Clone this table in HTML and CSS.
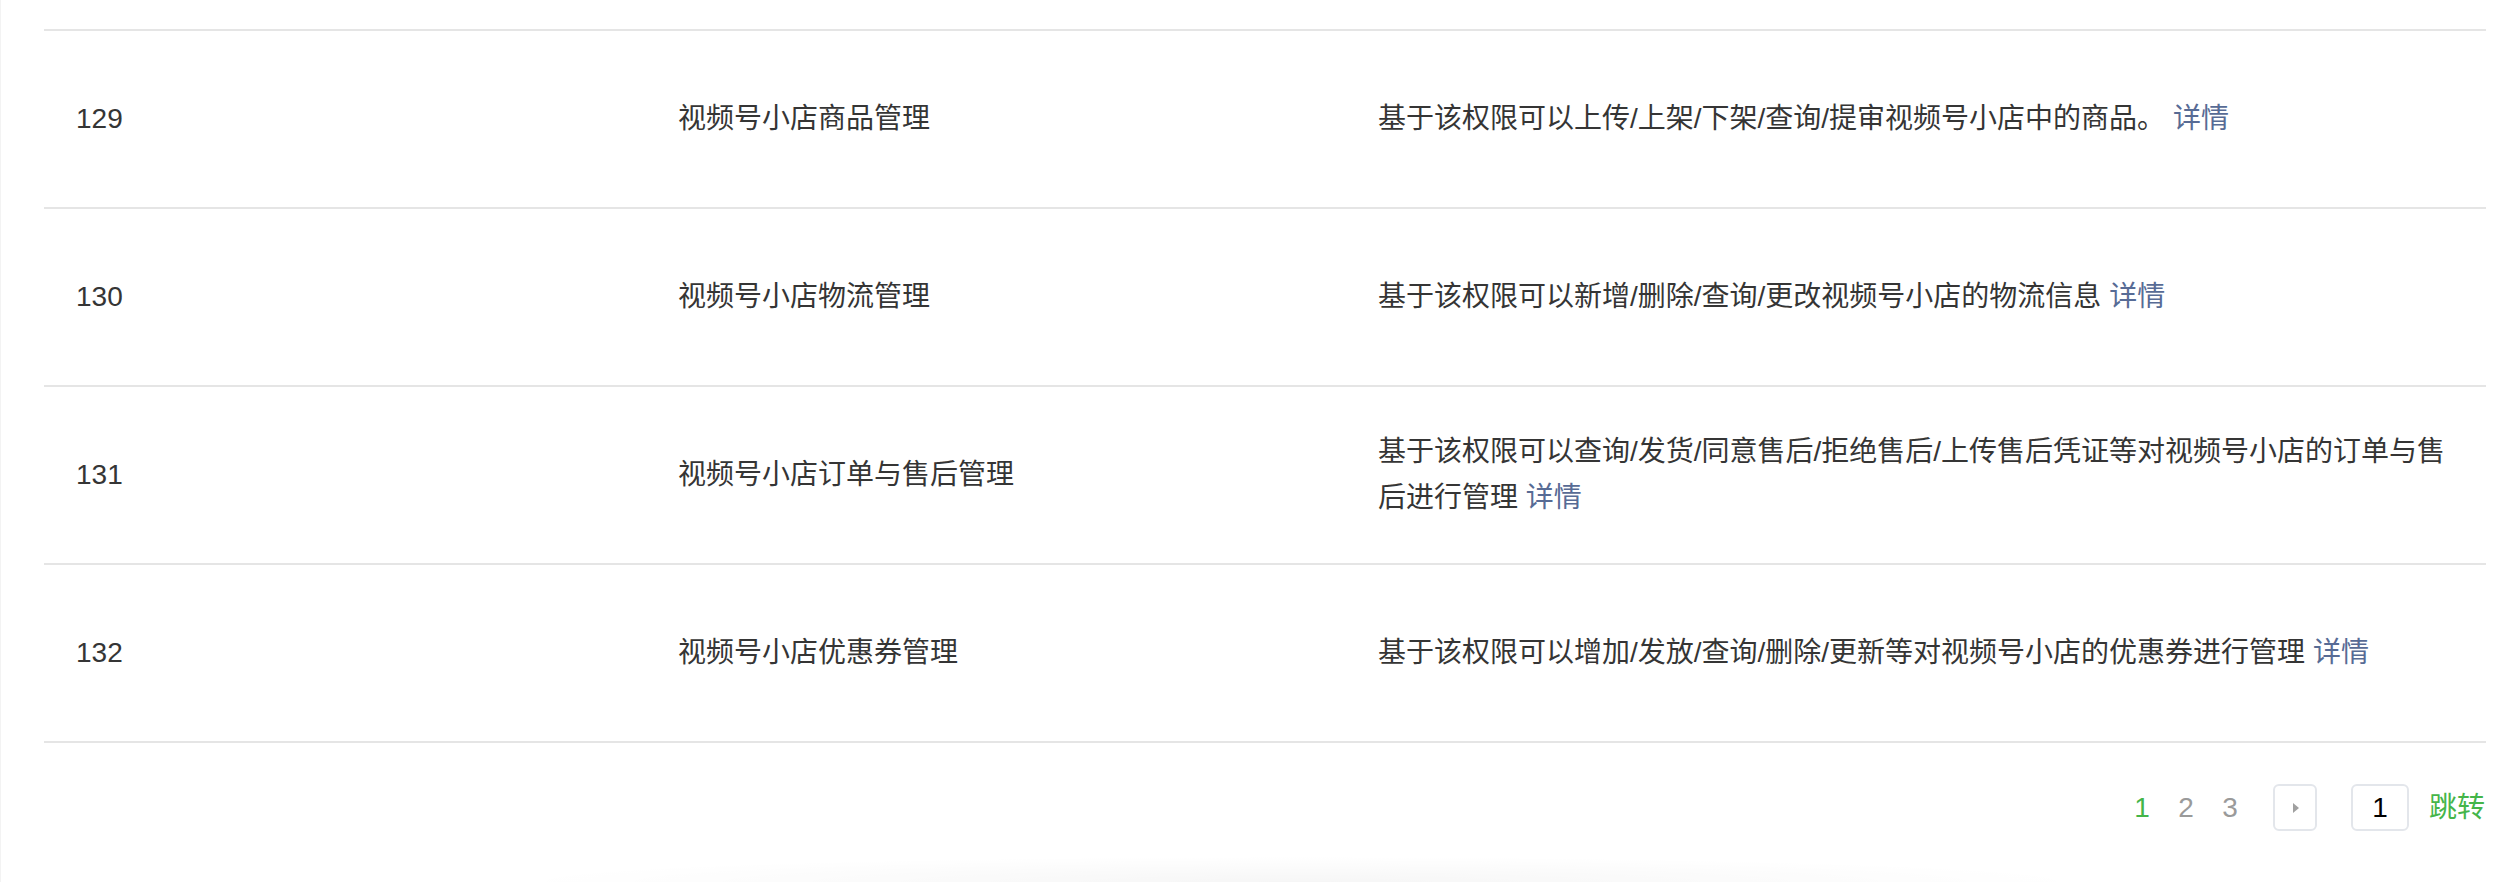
FILE: index.html
```html
<!DOCTYPE html>
<html lang="zh-CN">
<head>
<meta charset="utf-8">
<title>权限列表</title>
<link rel="stylesheet" href="styles.css">
</head>
<body>
<div class="page">
  <div class="table">
    <div class="row">
      <div class="cell c-id">129</div>
      <div class="cell c-name">视频号小店商品管理</div>
      <div class="cell c-desc">基于该权限可以上传/上架/下架/查询/提审视频号小店中的商品。 <a class="link" href="#">详情</a></div>
    </div>
    <div class="row">
      <div class="cell c-id">130</div>
      <div class="cell c-name">视频号小店物流管理</div>
      <div class="cell c-desc">基于该权限可以新增/删除/查询/更改视频号小店的物流信息 <a class="link" href="#">详情</a></div>
    </div>
    <div class="row">
      <div class="cell c-id">131</div>
      <div class="cell c-name">视频号小店订单与售后管理</div>
      <div class="cell c-desc">基于该权限可以查询/发货/同意售后/拒绝售后/上传售后凭证等对视频号小店的订单与售后进行管理 <a class="link" href="#">详情</a></div>
    </div>
    <div class="row">
      <div class="cell c-id">132</div>
      <div class="cell c-name">视频号小店优惠券管理</div>
      <div class="cell c-desc">基于该权限可以增加/发放/查询/删除/更新等对视频号小店的优惠券进行管理 <a class="link" href="#">详情</a></div>
    </div>
  </div>
  <div class="pager">
    <span class="num current">1</span>
    <span class="num">2</span>
    <span class="num">3</span>
    <span class="next"><span class="tri"></span></span>
    <span class="goto">1</span>
    <a class="jump" href="#">跳转</a>
  </div>
</div>
<div class="footer-shadow"></div>
</body>
</html>
```
FILE: styles.css
```css
html, body {
  margin: 0;
  padding: 0;
  background: #ffffff;
}

html {
  height: 882px;
  overflow: hidden;
}

body {
  font-family: "Liberation Sans", "Noto Sans CJK SC", sans-serif;
  font-size: 28px;
  color: #353535;
  overflow: hidden;
  height: 882px;
  position: relative;
  border-left: 1px solid #f3f3f3;
  box-sizing: border-box;
}

.page {
  padding: 29px 0 0 43px;
  width: 2442px;
}

.table {
  border-bottom: 2px solid #e5e5e5;
}

.row {
  display: grid;
  grid-template-columns: 602px 700px 1fr;
  height: 178px;
  box-sizing: border-box;
  border-top: 2px solid #e5e5e5;
  align-items: center;
}

.cell {
  padding: 0 32px;
  line-height: 46px;
}

.c-desc {
  padding-right: 28px;
}

.link {
  color: #576b95;
  text-decoration: none;
}

.pager {
  display: flex;
  justify-content: flex-end;
  align-items: center;
  margin-top: 41px;
  height: 47px;
  padding-right: 1px;
}

.num {
  width: 44px;
  text-align: center;
  color: #9a9a9a;
  line-height: 47px;
}

.num.current {
  color: #44b549;
}

.next {
  margin-left: 21px;
  width: 44px;
  height: 47px;
  box-sizing: border-box;
  border: 2px solid #e3e6eb;
  border-radius: 6px;
  display: flex;
  align-items: center;
  justify-content: center;
}

.tri {
  width: 0;
  height: 0;
  border-top: 5px solid transparent;
  border-bottom: 5px solid transparent;
  border-left: 6px solid #a0a0a0;
  margin-left: 2px;
}

.goto {
  margin-left: 34px;
  width: 58px;
  height: 47px;
  box-sizing: border-box;
  border: 2px solid #e3e6eb;
  border-radius: 6px;
  color: #000000;
  text-align: center;
  line-height: 43px;
}

.jump {
  margin-left: 20px;
  color: #44b549;
  text-decoration: none;
  line-height: 47px;
}

.footer-shadow {
  position: absolute;
  left: 500px;
  width: 1600px;
  bottom: 0;
  height: 26px;
  background: radial-gradient(ellipse 50% 100% at 50% 100%, rgba(0, 0, 0, 0.035), rgba(0, 0, 0, 0) 100%);
}
```
